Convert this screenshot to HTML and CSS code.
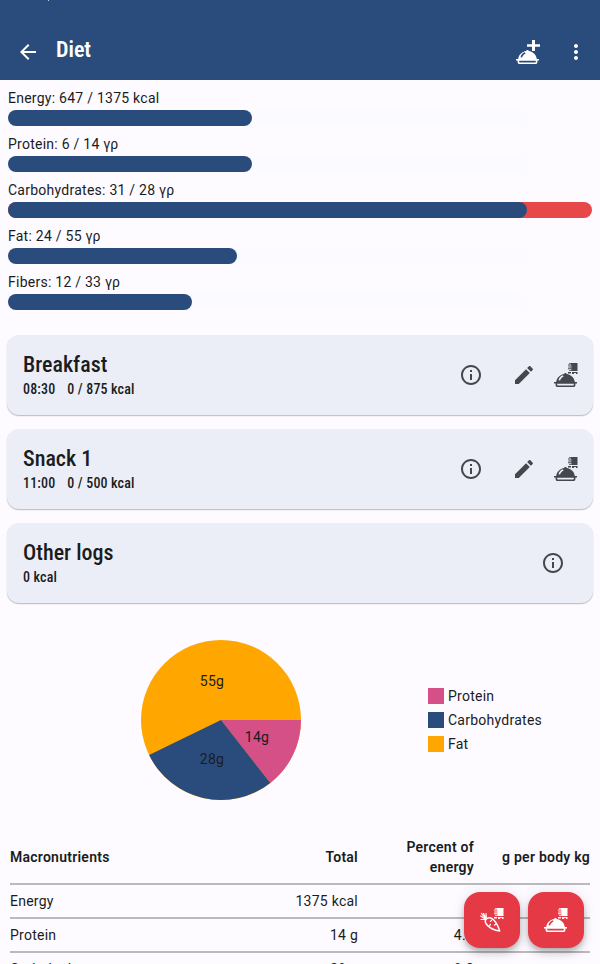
FILE: index.html
```html
<!DOCTYPE html>
<html lang="en">
<head>
<meta charset="utf-8">
<title>Diet</title>
<link rel="stylesheet" href="styles.css">
</head>
<body>
<svg class="defs" aria-hidden="true">
  <symbol id="dish" viewBox="0 0 24 24">
    <path fill="currentColor" fill-rule="evenodd" d="M0 19h2.200C2.700 14.900 6 11.500 10.200 11c-.2-1.500 2.700-1.500 2.500 0 4.400.5 7.600 3.900 8.100 8H23v1.600h-1.600v1.300c0 1.300-.8 2.100-2 2.100H3.600c-1.200 0-2-.8-2-2.100v-1.300H0zM4.500 17.300l1.600.2c.5-1.800 1.600-2.900 3.500-3.900l-.7-1.300c-2.500.9-3.800 2.500-4.400 5zM3.200 20.700v1.100c0 .4.200.6.600.6h15.400c.4 0 .6-.2.6-.6v-1.100z"/>
  </symbol>
  <symbol id="book" viewBox="0 0 24 24">
    <path fill="currentColor" fill-rule="evenodd" d="M15 0h8.500v8H15v-.8h2.500v-.9H14v-1h3.500v-.9H14.300v-1h3.200v-.9H14v-1h3V.8h-2zM14 9h3v1.500h-3zM18 9h5.500v2h-1.500V10h-2v1h-2z"/>
  </symbol>
  <symbol id="info" viewBox="0 0 24 24">
    <path fill="currentColor" d="M11 7h2v2h-2zm0 4h2v6h-2zm1-9C6.480 2 2 6.480 2 12s4.480 10 10 10 10-4.480 10-10S17.520 2 12 2zm0 18c-4.410 0-8-3.590-8-8s3.590-8 8-8 8 3.590 8 8-3.590 8-8 8z"/>
  </symbol>
  <symbol id="edit" viewBox="0 0 24 24">
    <path fill="currentColor" d="M3 17.250V21h3.750L17.810 9.940l-3.750-3.750L3 17.250zM20.710 7.040c.39-.39.39-1.020 0-1.410l-2.340-2.340c-.39-.39-1.020-.39-1.410 0l-1.830 1.830 3.750 3.750 1.830-1.830z"/>
  </symbol>
</svg>
<header class="bar">
  <i class="status-mark"></i>
  <svg class="back" viewBox="0 0 24 24"><path fill="#fff" d="M20 11H7.830l5.590-5.590L12 4l-8 8 8 8 1.410-1.410L7.830 13H20v-2z"/></svg>
  <h1><span class="cond">Diet</span></h1>
  <svg class="add" viewBox="0 0 24 24"><use href="#dish"/><path fill="#fff" d="M16 0h3v4.200h5v2.600h-5V11h-3V6.800h-5V4.200h5z"/></svg>
  <svg class="more" viewBox="0 0 24 24"><path fill="#fff" d="M12 8c1.100 0 2-.9 2-2s-.9-2-2-2-2 .9-2 2 .9 2 2 2zm0 2c-1.100 0-2 .9-2 2s.9 2 2 2 2-.9 2-2-.9-2-2-2zm0 6c-1.100 0-2 .9-2 2s.9 2 2 2 2-.9 2-2-.9-2-2-2z"/></svg>
</header>
<main>
  <section class="progress">
    <div class="item"><p>Energy: 647 / 1375 kcal</p><div class="track"><div class="fill" style="width:244px"></div></div></div>
    <div class="item"><p>Protein: 6 / 14 γρ</p><div class="track"><div class="fill" style="width:244px"></div></div></div>
    <div class="item"><p>Carbohydrates: 31 / 28 γρ</p><div class="track over"><div class="fill" style="width:519px"></div></div></div>
    <div class="item"><p>Fat: 24 / 55 γρ</p><div class="track"><div class="fill" style="width:229px"></div></div></div>
    <div class="item"><p>Fibers: 12 / 33 γρ</p><div class="track"><div class="fill" style="width:184px"></div></div></div>
  </section>
  <section class="meals">
    <article class="card">
      <div class="text"><h2><span class="cond">Breakfast</span></h2><p><span class="cond">08:30<b></b>0 / 875 kcal</span></p></div>
      <svg class="i-info"><use href="#info"/></svg><svg class="i-edit"><use href="#edit"/></svg><svg class="i-dish" viewBox="0 0 24 24"><use href="#dish"/><use href="#book"/></svg>
    </article>
    <article class="card">
      <div class="text"><h2><span class="cond">Snack 1</span></h2><p><span class="cond">11:00<b></b>0 / 500 kcal</span></p></div>
      <svg class="i-info"><use href="#info"/></svg><svg class="i-edit"><use href="#edit"/></svg><svg class="i-dish" viewBox="0 0 24 24"><use href="#dish"/><use href="#book"/></svg>
    </article>
    <article class="card other">
      <div class="text"><h2><span class="cond">Other logs</span></h2><p><span class="cond">0 kcal</span></p></div>
      <svg class="i-info"><use href="#info"/></svg>
    </article>
  </section>
  <section class="chart">
    <svg class="pie" viewBox="-80 -80 160 160">
      <circle r="80" fill="#ffa600"/>
      <path fill="#d45087" d="M0 0H80A80 80 0 0 1 49.300 63Z"/>
      <path fill="#2a4c7c" d="M0 0L49.300 63A80 80 0 0 1 -71.900 35Z"/>
      <text x="-9" y="-34">55g</text><text x="36" y="22">14g</text><text x="-9" y="44">28g</text>
    </svg>
    <ul class="legend">
      <li><i class="pink"></i>Protein</li>
      <li><i class="blue"></i>Carbohydrates</li>
      <li><i class="gold"></i>Fat</li>
    </ul>
  </section>
  <table>
    <thead><tr><th>Macronutrients</th><th>Total</th><th>Percent of<br>energy</th><th>g per body kg</th></tr></thead>
    <tbody>
      <tr><td>Energy</td><td>1375 kcal</td><td></td><td></td></tr>
      <tr><td>Protein</td><td>14 g</td><td>4.1</td><td></td></tr>
      <tr><td>Carbohydrates</td><td>28 g</td><td>8.2</td><td></td></tr>
    </tbody>
  </table>
</main>
<div class="fabs">
  <button><svg viewBox="0 0 24 24"><g fill="none" stroke="#fff" stroke-width="1.500" stroke-linecap="round" stroke-linejoin="round"><path d="M5.500 12C7.200 9.200 10.500 8.800 13.500 11.800c3 3 4.800 6.500 6.200 11.200-5.200-.8-9.500-2.600-12.200-5.500-1.800-1.900-2.700-3.800-2-5.500z"/><path stroke-width="1.200" d="M6 10.500L3.500 5.500M5 11L.8 8M4.700 9.500L1.500 5.500M6.300 10L6 5.500M5 11.300L1 11.500M10.500 13.300l1.200-1.200M14.500 17.200l1.200-1M9.500 17.500l1-1"/></g><use href="#book"/></svg></button>
  <button><svg viewBox="0 0 24 24"><use href="#dish"/><use href="#book"/></svg></button>
</div>
</body>
</html>
```
FILE: styles.css
```css
* { box-sizing: border-box; }
html { height: 964px; overflow: hidden; }
body {
  margin: 0; height: 964px; overflow: hidden;
  background: #fdfbff; color: #1a1c1e;
  font: 14px/20px Roboto, sans-serif; letter-spacing: .25px;
}
h1, h2, p, ul { margin: 0; padding: 0; }
svg { display: block; flex: none; width: 24px; height: 24px; }
.defs { position: absolute; width: 0; height: 0; }
.bar {
  position: relative; display: flex; height: 80px; padding: 40px 12px 0 16px;
  background: #2a4c7c; color: #fff;
}
.status-mark { position: absolute; left: 48px; top: 0; width: 1px; height: 1px; background: #c4cedb; }
.cond { display: inline-block; font-family: "Roboto Condensed", Roboto, sans-serif; font-stretch: 75%; }
.bar h1 { margin: -4px 0 0 16px; flex: 1; font-size: 22px; line-height: 28px; font-weight: 600; letter-spacing: 0; }
.bar .more { margin-left: 24px; }
.progress { padding: 8px 8px 0; }
.item { height: 46px; }
.item p { height: 22px; }
.track { width: 519px; height: 16px; border-radius: 8px; background: #fafaff; }
.over { width: 584px; background: #e84749; }
.fill { height: 16px; border-radius: 8px; background: #2a4c7c; }
.meals { display: grid; gap: 14px; padding: 17px 7px 0; }
.card {
  display: flex; height: 80px; padding: 16px 15px 0 16px; border-radius: 12px;
  background: #ebeef6; box-shadow: 0 1px 1px rgba(0,0,0,.2), 0 1px 2px rgba(0,0,0,.08);
}
.text { flex: 1; }
.card h2 { font-size: 22px; line-height: 28px; font-weight: 500; letter-spacing: 0; white-space: nowrap; }
.card p { line-height: 20px; font-weight: 500; letter-spacing: .15px; white-space: nowrap; }
.card b { display: inline-block; width: 12px; }
.card svg { margin-top: 12px; color: #44474e; }
.card .i-edit { margin-left: 29px; }
.card .i-dish { margin-left: 18px; }
.other { padding-right: 28px; }
.chart { display: flex; align-items: center; height: 160px; margin: 37px 0 0 141px; }
.pie { width: 160px; height: 160px; }
.pie text { font-size: 14px; fill: #1a1c1e; text-anchor: middle; }
.legend { margin: 0 0 0 127px; list-style: none; }
.legend li { display: flex; align-items: center; height: 24px; }
.legend i { width: 16px; height: 16px; margin-right: 4px; }
.pink { background: #d45087; }
.blue { background: #2a4c7c; }
.gold { background: #ffa600; }
table { width: 580px; margin: 30px 0 0 10px; border-collapse: collapse; table-layout: fixed; }
th, td { padding: 0; height: 34px; text-align: right; border-bottom: 2px solid #b9b9be; }
th { height: 54px; font-weight: 600; }
th:first-child, td:first-child { text-align: left; width: 232px; }
th:nth-child(2) { width: 116px; }
th:nth-child(3) { width: 116px; }
.fabs { position: fixed; right: 16px; bottom: 16px; display: flex; gap: 8px; }
.fabs button {
  display: grid; place-items: center; width: 56px; height: 56px; padding: 0; border: 0; border-radius: 16px;
  color: #fff; background: #e63946;
  box-shadow: 0 3px 5px -1px rgba(0,0,0,.2), 0 6px 10px rgba(0,0,0,.14), 0 1px 14px rgba(0,0,0,.1);
}
```
